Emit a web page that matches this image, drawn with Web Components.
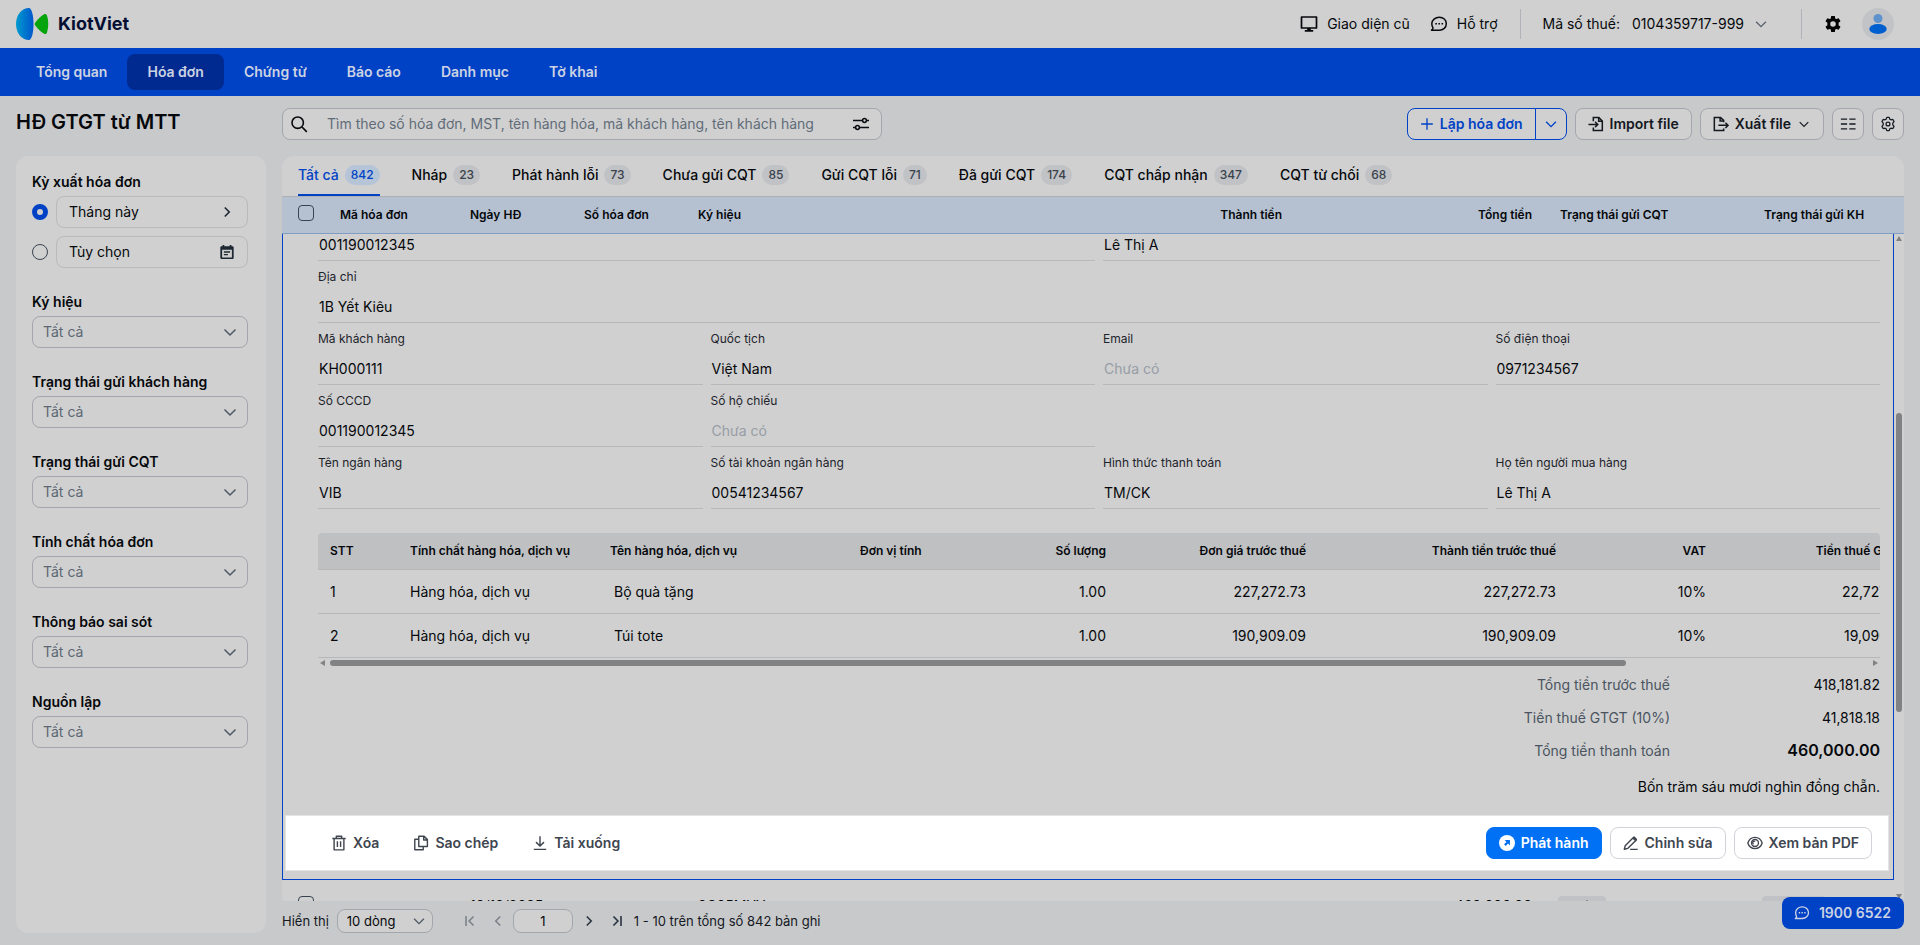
<!DOCTYPE html>
<html lang="vi">
<head>
<meta charset="utf-8">
<meta name="viewport" content="width=device-width, initial-scale=1">
<title>HĐ GTGT từ MTT - KiotViet</title>
<style>
  html, body { margin: 0; height: 100%; }
  body {
    --surface: #d0d0d0;
    --page: #c8c9cb;
    --primary: #0042c6;
    --line: #b9babd;
    --border: #a4a6ad;
    --muted: #5c6773;
    background: var(--page);
    color: #06080c;
    font: 14px/20px Inter, "Noto Sans", sans-serif;
  }
</style>
</head>
<body>
<invoice-app></invoice-app>

<script>
const ICONS = {
  monitor: `<path d="M1.500 2h15v11h-15z" fill="none" stroke="currentColor" stroke-width="1.700" stroke-linejoin="round"/><path d="M7.200 13h3.600v2h2.400v1.700H4.800V15h2.400z" fill="currentColor"/>`,
  chat: `<path d="M9.300 2.200c4 0 7 2.800 7 6.500s-3 6.500-7 6.500H1.500c1.200-.8 1.600-1.600 1.500-2.500-.8-1.100-1.200-2.400-1.200-4 0-3.700 3.500-6.500 7.500-6.500z" fill="none" stroke="currentColor" stroke-width="1.500" stroke-linejoin="round"/><path d="M5.300 7.900h1.600v1.600H5.300zM8.400 7.900H10v1.600H8.400zM11.500 7.900h1.600v1.600h-1.600z" fill="currentColor"/>`,
  down: `<path d="M3.500 6.500l5.500 5.500 5.500-5.500" fill="none" stroke="currentColor" stroke-width="1.500"/>`,
  right: `<path d="M6.500 4l5 5-5 5" fill="none" stroke="currentColor" stroke-width="1.800"/>`,
  left: `<path d="M11.500 4l-5 5 5 5" fill="none" stroke="currentColor" stroke-width="1.800"/>`,
  first: `<path d="M4.500 3.500v11M13 4L8 9l5 5" fill="none" stroke="currentColor" stroke-width="1.800"/>`,
  last: `<path d="M13.500 3.500v11M5 4l5 5-5 5" fill="none" stroke="currentColor" stroke-width="1.800"/>`,
  gearFill: `<path fill-rule="evenodd" d="M7.200 1h3.600l.4 2.400 1.200.7 2.300-.9 1.800 3.100-1.900 1.500v2.400l1.900 1.500-1.800 3.100-2.300-.9-1.200.7-.4 2.400H7.200l-.4-2.400-1.200-.7-2.300.9-1.800-3.100 1.900-1.500V7.800L1.500 6.300l1.800-3.100 2.300.9 1.200-.7zM9 6.200a2.800 2.800 0 100 5.600 2.800 2.800 0 000-5.600z" fill="currentColor"/>`,
  gear: `<path d="M7.700 1.500h2.600l.7 2 1.300.8 2.200-.4 1.300 2.300-1.400 1.700v2.200l1.400 1.700-1.300 2.300-2.200-.4-1.300.8-.7 2H7.700l-.7-2-1.300-.8-2.200.4-1.300-2.300 1.400-1.700V7.900L2.200 6.200l1.300-2.300 2.200.4L7 3.500z" fill="none" stroke="currentColor" stroke-width="1.400" stroke-linejoin="round"/><circle cx="9" cy="9" r="2.200" fill="none" stroke="currentColor" stroke-width="1.400"/>`,
  search: `<circle cx="7.700" cy="7.700" r="5.700" fill="none" stroke="currentColor" stroke-width="1.600"/><path d="M12 12l4.800 4.800" stroke="currentColor" stroke-width="1.700"/>`,
  sliders: `<g fill="none" stroke="currentColor" stroke-width="1.500"><path d="M1 5.500h9.500M14.500 5.500H17M1 12.500h2.500M7.500 12.500H17"/><circle cx="12.500" cy="5.500" r="1.900"/><circle cx="5.500" cy="12.500" r="1.900"/></g>`,
  plus: `<path d="M9 1.500v15M1.500 9h15" stroke="currentColor" stroke-width="1.700"/>`,
  importFile: `<g fill="none" stroke="currentColor" stroke-width="1.700"><path d="M6 6V1.800h6.200l3.900 3.900v10.500H6V13"/><path d="M12 2v4h4M.5 9.500h10M8 6.500l3 3-3 3"/></g>`,
  exportFile: `<g fill="none" stroke="currentColor" stroke-width="1.700"><path d="M12 7V5L8.500 1.800H1.500v14.400H12V14"/><path d="M8 2v3.500h4M6 10.500h11M14 7.500l3 3-3 3"/></g>`,
  columns: `<path d="M1 3.500h7M10.500 3.500h7M1 9h7M10.500 9h7M1 14.500h7M10.500 14.500h7" stroke="currentColor" stroke-width="1.500"/>`,
  calendar: `<path fill-rule="evenodd" d="M4 1h2v1.500h6V1h2v1.500h1.500l1 1V16l-1 1h-13l-1-1V3.500l1-1H4zM3.500 6.500v8.800h11V6.500z" fill="currentColor"/><path d="M5.500 9h7M5.500 12h4.500" stroke="currentColor" stroke-width="1.500"/>`,
  trash: `<path d="M1.500 4h15M6 3.800V1.500h6v2.300M3.500 4v12.700h11V4M7.200 7v6.500M10.800 7v6.500" fill="none" stroke="currentColor" stroke-width="1.600" stroke-linejoin="round"/>`,
  copy: `<path d="M6.500 1.500h6l3.700 3.700v7.700H6.500zM12 1.700v4h4M6 4.800H2v11.700h9.500V13" fill="none" stroke="currentColor" stroke-width="1.600" stroke-linejoin="round"/>`,
  download: `<path d="M9 1.500v10.700M4.500 8L9 12.300 13.500 8M2 16.200h14" fill="none" stroke="currentColor" stroke-width="1.600"/>`,
  publish: `<circle cx="9" cy="9" r="9" fill="currentColor"/><path d="M6.300 5.700h6v6l-2.100-2.100-2.700 2.700-1.800-1.800 2.700-2.700z" fill="#0070f4"/>`,
  edit: `<path d="M2.500 12L12 2.500l3 3L5.500 15l-4 1zM8 16.200h8.500" fill="none" stroke="currentColor" stroke-width="1.600" stroke-linejoin="round"/><path d="M10.500 4l2.300-2.500L16 4.700 13.800 7z" fill="currentColor"/>`,
  eye: `<g fill="none" stroke="currentColor" stroke-width="1.500"><path d="M.9 9C2.200 5 5.300 2.700 9 2.700S15.800 5 17.100 9c-1.300 4-4.400 6.300-8.100 6.300S2.200 13 .9 9z"/><circle cx="9" cy="9" r="3.900"/><path d="M9 7.500A1.500 1.500 0 107.700 10"/></g>`,
};

class BaseElement extends HTMLElement {
  constructor() {
    super();
    this.shadow = this.attachShadow({ mode: "open" });
  }
  connectedCallback() {
    this.render();
  }
}

class AppIcon extends BaseElement {
  render() {
    const size = this.getAttribute("size") || 16;
    this.shadow.innerHTML = `
      <style>
        :host { display: inline-flex; flex: none; }
        svg { display: block; }
      </style>
      <svg width="${size}" height="${size}" viewBox="0 0 18 18" aria-hidden="true">${ICONS[this.getAttribute("name")]}</svg>`;
  }
}

class AppButton extends BaseElement {
  render() {
    const label = this.getAttribute("label");
    this.shadow.innerHTML = `
      <style>
        :host { display: inline-flex; }
        button {
          display: flex;
          align-items: center;
          justify-content: center;
          gap: 6px;
          box-sizing: border-box;
          height: 32px;
          min-width: 32px;
          padding: 0 12px;
          border: 1px solid var(--border);
          border-radius: 8px;
          background: var(--button-bg, transparent);
          color: #14181f;
          font: 600 14px/20px Inter, sans-serif;
          white-space: nowrap;
        }
        :host([kind="icon"]) button { padding: 0; }
        :host([kind="publish"]) button { background: #0070f4; border-color: #0070f4; color: #fff; }
        :host([kind="light"]) button { background: #fff; border-color: #d1d3d9; color: #40464f; }
        :host([kind="plain"]) button { border-color: transparent; color: #40464f; }
      </style>
      <button type="button"${label ? ` aria-label="${label}"` : ""}><slot></slot></button>`;
  }
}

class AppHeader extends BaseElement {
  render() {
    this.shadow.innerHTML = `
      <style>
        :host {
          display: flex;
          align-items: center;
          height: 48px;
          box-sizing: border-box;
          padding: 0 26px 0 16px;
          background: var(--surface);
        }
        a { display: flex; align-items: center; gap: 9px; color: inherit; text-decoration: none; }
        .logo { margin-right: auto; font-size: 18px; font-weight: 700; color: #050f33; }
        .help { margin-left: 20px; }
        .divider { width: 1px; height: 30px; background: #b0b2b7; margin: 0 22px; }
        .tax {
          display: flex;
          align-items: center;
          gap: 9px;
          padding: 0;
          border: 0;
          background: none;
          color: inherit;
          font: inherit;
        }
        .tax span { margin-right: 3px; }
        .tax app-icon { color: #59616d; margin-right: 10px; }
        .settings { display: flex; padding: 0; border: 0; background: none; color: #000; }
        .avatar { margin-left: 20px; padding: 0; border: 0; background: none; display: flex; }
      </style>
      <a class="logo" href="#">
        <svg width="33" height="32" viewBox="0 0 33 32" aria-hidden="true">
          <defs><linearGradient id="g"><stop offset="0" stop-color="#009bce"/><stop offset="1" stop-color="#0056cd"/></linearGradient></defs>
          <path d="M13 0c2.500 0 4.500 7 4.500 16S15.500 32 13 32C5.500 32 0 25 0 16S5.500 0 13 0z" fill="url(#g)"/>
          <path d="M19.300 14.500c2.500-3.400 5.700-6.600 8.800-8.300 1.300-.7 2.400 0 2.900 1.400 1.700 5 1.700 11.800 0 16.800-.5 1.400-1.600 2.100-2.900 1.400-3.100-1.700-6.300-4.900-8.800-8.300-.8-1-.8-2 0-3z" fill="#05a40c"/>
        </svg>
        KiotViet
      </a>
      <a href="#"><app-icon name="monitor" size="18"></app-icon>Giao diện cũ</a>
      <a class="help" href="#"><app-icon name="chat" size="18"></app-icon>Hỗ trợ</a>
      <div class="divider"></div>
      <button class="tax" type="button"><span>Mã số thuế:</span>0104359717-999<app-icon name="down"></app-icon></button>
      <div class="divider"></div>
      <button class="settings" type="button" aria-label="Cài đặt"><app-icon name="gearFill" size="18"></app-icon></button>
      <button class="avatar" type="button" aria-label="Tài khoản">
        <svg width="32" height="32" viewBox="0 0 32 32" aria-hidden="true">
          <circle cx="16" cy="16" r="16" fill="#c1c3c6"/>
          <circle cx="16" cy="10.500" r="4.500" fill="#5f92cd"/>
          <ellipse cx="16" cy="21" rx="8.700" ry="5" fill="#005fcf"/>
        </svg>
      </button>`;
  }
}

class MainNav extends BaseElement {
  render() {
    const items = ["Tổng quan", "Hóa đơn", "Chứng từ", "Báo cáo", "Danh mục", "Tờ khai"];
    this.shadow.innerHTML = `
      <style>
        :host { display: block; background: var(--primary); }
        nav { display: flex; align-items: center; height: 48px; padding: 0 16px; }
        a {
          padding: 8px 20px;
          border-radius: 8px;
          color: #ccd3e3;
          font-weight: 600;
          text-decoration: none;
        }
        a.active { background: #002a8f; }
      </style>
      <nav>${items.map((t, i) => `<a href="#"${i === 1 ? ' class="active" aria-current="page"' : ""}>${t}</a>`).join("")}</nav>`;
  }
}

class FilterSelect extends BaseElement {
  render() {
    this.shadow.innerHTML = `
      <style>
        :host { display: grid; gap: 4px; }
        label { font-weight: 600; }
        .box { display: grid; align-items: center; }
        .box > * { grid-area: 1 / 1; }
        select {
          appearance: none;
          height: 32px;
          width: 100%;
          box-sizing: border-box;
          padding: 0 10px;
          border: 1px solid var(--border);
          border-radius: 8px;
          background: transparent;
          color: var(--muted);
          font: inherit;
        }
        app-icon { justify-self: end; margin-right: 9px; pointer-events: none; color: #4f5966; }
      </style>
      <label for="s">${this.getAttribute("label")}</label>
      <div class="box">
        <select id="s"><option>Tất cả</option></select>
        <app-icon name="down" size="18"></app-icon>
      </div>`;
  }
}

class FilterPanel extends BaseElement {
  render() {
    const filters = ["Ký hiệu", "Trạng thái gửi khách hàng", "Trạng thái gửi CQT", "Tính chất hóa đơn", "Thông báo sai sót", "Nguồn lập"];
    this.shadow.innerHTML = `
      <style>
        :host {
          display: flex;
          flex-direction: column;
          gap: 24px;
          flex: 1;
          padding: 16px 18px 16px 16px;
          border-radius: 12px;
          background: var(--surface);
        }
        fieldset { display: grid; gap: 8px; margin: 0; padding: 0; border: 0; }
        legend { padding: 0; margin-bottom: 4px; font-weight: 600; }
        .row { display: flex; align-items: center; gap: 8px; }
        input {
          appearance: none;
          flex: none;
          box-sizing: border-box;
          width: 16px;
          height: 16px;
          margin: 0;
          border: 1px solid #39434f;
          border-radius: 50%;
        }
        input:checked { border: 5px solid var(--primary); }
        label {
          display: flex;
          flex: 1;
          align-items: center;
          justify-content: space-between;
          box-sizing: border-box;
          height: 32px;
          padding: 0 12px;
          border: 1px solid var(--line);
          border-radius: 8px;
        }
        app-icon { color: #1e2833; }
      </style>
      <fieldset>
        <legend>Kỳ xuất hóa đơn</legend>
        <div class="row"><input type="radio" name="p" id="month" checked><label for="month">Tháng này<app-icon name="right"></app-icon></label></div>
        <div class="row"><input type="radio" name="p" id="custom"><label for="custom">Tùy chọn<app-icon name="calendar"></app-icon></label></div>
      </fieldset>
      ${filters.map((f) => `<filter-select label="${f}"></filter-select>`).join("")}`;
  }
}

class InvoiceToolbar extends BaseElement {
  render() {
    this.shadow.innerHTML = `
      <style>
        :host { display: flex; gap: 8px; }
        .search {
          display: flex;
          align-items: center;
          box-sizing: border-box;
          width: 600px;
          height: 32px;
          margin-right: auto;
          padding: 0 11px 0 7px;
          border: 1px solid var(--border);
          border-radius: 8px;
          background: var(--surface);
        }
        input {
          flex: 1;
          min-width: 0;
          margin: 0 19px;
          padding: 0;
          border: 0;
          outline: 0;
          background: none;
          font: inherit;
        }
        input::placeholder { color: #616c78; opacity: 1; }
        .search button { display: flex; padding: 0; border: 0; background: none; color: #0a0d12; }
        app-button { --button-bg: var(--surface); }
        .split { display: flex; border: 1px solid var(--primary); border-radius: 8px; background: var(--surface); overflow: hidden; box-sizing: border-box; height: 32px; }
        .split button {
          display: flex;
          align-items: center;
          gap: 6px;
          padding: 0 12px;
          border: 0;
          background: none;
          color: var(--primary);
          font: 600 14px/20px Inter, sans-serif;
        }
        .split button + button { padding: 0 7px; border-left: 1px solid var(--primary); }
      </style>
      <div class="search">
        <app-icon name="search" size="18"></app-icon>
        <input type="text" aria-label="Tìm kiếm" placeholder="Tìm theo số hóa đơn, MST, tên hàng hóa, mã khách hàng, tên khách hàng">
        <button type="button" aria-label="Bộ lọc"><app-icon name="sliders" size="18"></app-icon></button>
      </div>
      <div class="split">
        <button type="button"><app-icon name="plus" size="14"></app-icon>Lập hóa đơn</button>
        <button type="button" aria-label="Thêm lựa chọn"><app-icon name="down"></app-icon></button>
      </div>
      <app-button><app-icon name="importFile"></app-icon>Import file</app-button>
      <app-button><app-icon name="exportFile"></app-icon>Xuất file<app-icon name="down" size="14"></app-icon></app-button>
      <app-button kind="icon" label="Cột hiển thị"><app-icon name="columns"></app-icon></app-button>
      <app-button kind="icon" label="Thiết lập"><app-icon name="gear"></app-icon></app-button>`;
  }
}

class StatusTabs extends BaseElement {
  render() {
    const tabs = [["Tất cả", 842], ["Nháp", 23], ["Phát hành lỗi", 73], ["Chưa gửi CQT", 85], ["Gửi CQT lỗi", 71], ["Đã gửi CQT", 174], ["CQT chấp nhận", 347], ["CQT từ chối", 68]];
    this.shadow.innerHTML = `
      <style>
        :host { display: block; border-bottom: 1px solid #aeb0b4; }
        div { display: flex; gap: 32px; padding: 0 16px; }
        button {
          display: flex;
          align-items: center;
          gap: 6px;
          height: 40px;
          padding: 0;
          border: 0;
          border-bottom: 2px solid transparent;
          background: none;
          color: inherit;
          font: 500 14px/20px Inter, sans-serif;
          white-space: nowrap;
        }
        span {
          padding: 0 6px;
          border-radius: 10px;
          background: #c0c2c5;
          color: #39414b;
          font-size: 12px;
        }
        button.active { border-color: var(--primary); color: var(--primary); }
        .active span { background: #b5c4d6; color: var(--primary); }
      </style>
      <div role="tablist">
        ${tabs.map(([t, n], i) => `<button type="button" role="tab" aria-selected="${i === 0}" class="${i === 0 ? "active" : ""}">${t}<span>${n}</span></button>`).join("")}
      </div>`;
  }
}

class InfoField extends BaseElement {
  render() {
    const label = this.getAttribute("label");
    this.shadow.innerHTML = `
      <style>
        :host { display: block; border-bottom: 1px solid #b7b8ba; padding-bottom: 4px; }
        .label { padding: 6px 0 9px; font-size: 12px; color: #1d232b; }
        .value { padding-left: 1px; line-height: 22px; }
        :host([empty]) .value { color: #979da6; }
      </style>
      ${label ? `<div class="label">${label}</div>` : ""}
      <div class="value"><slot></slot></div>`;
  }
}

class ItemsTable extends BaseElement {
  render() {
    const heads = ["STT", "Tính chất hàng hóa, dịch vụ", "Tên hàng hóa, dịch vụ", "Đơn vị tính", "Số lượng", "Đơn giá trước thuế", "Thành tiền trước thuế", "VAT", "Tiền thuế GTGT"];
    const widths = [80, 200, 250, 150, 120, 200, 250, 150, 200];
    const rows = [
      ["1", "Hàng hóa, dịch vụ", "Bộ quà tặng", "", "1.00", "227,272.73", "227,272.73", "10%", "22,727.27"],
      ["2", "Hàng hóa, dịch vụ", "Túi tote", "", "1.00", "190,909.09", "190,909.09", "10%", "19,090.91"],
    ];
    this.shadow.innerHTML = `
      <style>
        :host { display: block; }
        .view { overflow: hidden; border-radius: 4px 4px 0 0; }
        table { table-layout: fixed; width: 1600px; border-collapse: separate; border-spacing: 0; }
        th, td { box-sizing: border-box; padding: 0 12px; border-bottom: 1px solid #b7b8ba; text-align: left; white-space: nowrap; }
        th { height: 37px; background: #bfc0c2; font-size: 12px; font-weight: 600; }
        td { height: 44px; }
        td:nth-child(3) { padding-left: 16px; }
        th:nth-child(n+5), td:nth-child(n+5) { text-align: right; }
        .scroll { display: flex; align-items: center; justify-content: space-between; margin-top: 2px; height: 6px; }
        .thumb { width: 83%; height: 6px; margin: 0 auto 0 5px; border-radius: 3px; background: #818284; }
        i { border: 3px solid transparent; }
        .prev { border-right: 5px solid #818284; border-left: 0; margin-left: 2px; }
        .next { border-left: 5px solid #818284; border-right: 0; margin-right: 2px; }
      </style>
      <div class="view">
        <table>
          <colgroup>${widths.map((w) => `<col style="width:${w}px">`).join("")}</colgroup>
          <thead><tr>${heads.map((h) => `<th>${h}</th>`).join("")}</tr></thead>
          <tbody>${rows.map((r) => `<tr>${r.map((c) => `<td>${c}</td>`).join("")}</tr>`).join("")}</tbody>
        </table>
      </div>
      <div class="scroll"><i class="prev"></i><div class="thumb"></div><i class="next"></i></div>`;
  }
}

class InvoiceTotals extends BaseElement {
  render() {
    this.shadow.innerHTML = `
      <style>
        :host { display: block; margin-top: 2px; text-align: right; }
        dl { display: grid; grid-template-columns: 1fr 210px; margin: 0; line-height: 33px; }
        dt { color: #4a545f; }
        dd { margin: 0; }
        .total { font-size: 16px; font-weight: 600; }
        p { margin: 0; line-height: 39px; }
      </style>
      <dl>
        <dt>Tổng tiền trước thuế</dt><dd>418,181.82</dd>
        <dt>Tiền thuế GTGT (10%)</dt><dd>41,818.18</dd>
        <dt>Tổng tiền thanh toán</dt><dd class="total">460,000.00</dd>
      </dl>
      <p>Bốn trăm sáu mươi nghìn đồng chẵn.</p>`;
  }
}

class InvoiceDetail extends BaseElement {
  render() {
    this.shadow.innerHTML = `
      <style>
        :host { display: block; border: 1px solid var(--primary); border-top: 0; }
        .content { padding: 0 13px 0 35px; }
        .fields { display: grid; grid-template-columns: repeat(4, 1fr); column-gap: 8px; margin-bottom: 24px; }
        .half { grid-column: span 2; }
        .full { grid-column: 1 / -1; }
        .row-start { grid-column-start: 1; }
        .actions {
          display: flex;
          align-items: center;
          gap: 8px;
          box-sizing: border-box;
          height: 56px;
          margin: 9px 4px 8px 2px;
          padding: 0 16px 0 32px;
          border: 1px solid #e4e4e4;
          background: #fff;
        }
        .left { display: flex; gap: 8px; margin-right: auto; }
      </style>
      <div class="content">
        <div class="fields">
          <info-field class="half">001190012345</info-field>
          <info-field class="half">Lê Thị A</info-field>
          <info-field class="full" label="Địa chỉ">1B Yết Kiêu</info-field>
          <info-field label="Mã khách hàng">KH000111</info-field>
          <info-field label="Quốc tịch">Việt Nam</info-field>
          <info-field label="Email" empty>Chưa có</info-field>
          <info-field label="Số điện thoại">0971234567</info-field>
          <info-field label="Số CCCD">001190012345</info-field>
          <info-field label="Số hộ chiếu" empty>Chưa có</info-field>
          <info-field class="row-start" label="Tên ngân hàng">VIB</info-field>
          <info-field label="Số tài khoản ngân hàng">00541234567</info-field>
          <info-field label="Hình thức thanh toán">TM/CK</info-field>
          <info-field label="Họ tên người mua hàng">Lê Thị A</info-field>
        </div>
        <items-table></items-table>
        <invoice-totals></invoice-totals>
      </div>
      <div class="actions">
        <div class="left">
          <app-button kind="plain"><app-icon name="trash"></app-icon>Xóa</app-button>
          <app-button kind="plain"><app-icon name="copy"></app-icon>Sao chép</app-button>
          <app-button kind="plain"><app-icon name="download"></app-icon>Tải xuống</app-button>
        </div>
        <app-button kind="publish"><app-icon name="publish"></app-icon>Phát hành</app-button>
        <app-button kind="light"><app-icon name="edit"></app-icon>Chỉnh sửa</app-button>
        <app-button kind="light"><app-icon name="eye"></app-icon>Xem bản PDF</app-button>
      </div>`;
  }
}

class InvoiceTable extends BaseElement {
  render() {
    this.shadow.innerHTML = `
      <style>
        :host { display: block; position: relative; flex: 1; min-height: 0; overflow: hidden; }
        table { table-layout: fixed; width: 100%; border-collapse: separate; border-spacing: 0; }
        th, td { box-sizing: border-box; padding: 0 14px; text-align: left; white-space: nowrap; }
        th { height: 37px; border-bottom: 1px solid #809dc5; background: #b5c1d1; font-size: 12px; font-weight: 600; }
        th:first-child, td:first-child { padding: 0 0 0 16px; }
        th:nth-child(6), th:nth-child(7), td:nth-child(6), td:nth-child(7) { text-align: right; }
        td.detail { padding: 0 10px 0 0; }
        .next td { height: 48px; padding-top: 16px; vertical-align: top; }
        .badge { display: block; box-sizing: border-box; width: 48px; height: 20px; margin-left: -2px; border-radius: 4px; background: #c0c2c5; font-size: 12px; text-align: center; }
        .badge.wide { width: 64px; }
        input {
          appearance: none;
          display: block;
          box-sizing: border-box;
          width: 16px;
          height: 16px;
          margin: 0 0 4px;
          border: 1px solid #39434f;
          border-radius: 4px;
        }
        .next input { margin: 0; }
        .bar { position: absolute; top: 37px; right: 0; bottom: 0; width: 10px; box-sizing: border-box; padding: 2px; display: flex; flex-direction: column; align-items: center; }
        .gap { height: 26%; }
        .thumb { width: 6px; height: 45%; margin: 0 0 auto; border-radius: 3px; background: #818284; }
        i { border: 3px solid transparent; }
        .up { border-bottom: 5px solid #818284; border-top: 0; }
        .down { border-top: 5px solid #818284; border-bottom: 0; }
      </style>
      <table>
        <colgroup><col style="width:44px"><col style="width:130px"><col style="width:114px"><col style="width:114px"><col><col style="width:160px"><col style="width:250px"><col style="width:204px"><col style="width:154px"></colgroup>
        <thead>
          <tr><th><input type="checkbox" aria-label="Chọn tất cả"></th><th>Mã hóa đơn</th><th>Ngày HĐ</th><th>Số hóa đơn</th><th>Ký hiệu</th><th>Thành tiền</th><th>Tổng tiền</th><th>Trạng thái gửi CQT</th><th>Trạng thái gửi KH</th></tr>
        </thead>
        <tbody>
          <tr><td class="detail" colspan="9"><invoice-detail></invoice-detail></td></tr>
          <tr class="next"><td><input type="checkbox" aria-label="Chọn hóa đơn"></td><td></td><td>10/12/2025</td><td></td><td>2C25MYY</td><td></td><td>460,000.00</td><td><span class="badge">Nháp</span></td><td><span class="badge wide"></span></td></tr>
        </tbody>
      </table>
      <div class="bar"><i class="up"></i><div class="gap"></div><div class="thumb"></div><i class="down"></i></div>`;
  }
}

class TablePager extends BaseElement {
  render() {
    this.shadow.innerHTML = `
      <style>
        :host { display: flex; align-items: center; height: 24px; padding: 8px 0 12px; font-size: 13px; color: #14181f; }
        .size { display: grid; align-items: center; margin: 0 24px 0 8px; }
        .size > * { grid-area: 1 / 1; }
        .size app-icon { justify-self: end; margin-right: 6px; pointer-events: none; color: #4f5966; }
        select, input {
          appearance: none;
          box-sizing: border-box;
          height: 24px;
          border: 1px solid var(--border);
          border-radius: 8px;
          background: var(--surface);
          color: #06080c;
          font: inherit;
        }
        select { width: 96px; padding: 0 9px; }
        input { width: 60px; padding: 0; text-align: center; }
        button { display: flex; padding: 0 5px; border: 0; background: none; color: #2a3440; }
        button:disabled { color: #7d838b; }
        .prev { margin: 0 2px; }
        .next { margin: 0 2px 0 3px; }
        .info { margin-left: 4px; }
      </style>
      <label for="size">Hiển thị</label>
      <div class="size"><select id="size"><option>10 dòng</option></select><app-icon name="down"></app-icon></div>
      <button type="button" disabled aria-label="Trang đầu"><app-icon name="first"></app-icon></button>
      <button class="prev" type="button" disabled aria-label="Trang trước"><app-icon name="left"></app-icon></button>
      <input type="text" value="1" aria-label="Trang">
      <button class="next" type="button" aria-label="Trang sau"><app-icon name="right"></app-icon></button>
      <button type="button" aria-label="Trang cuối"><app-icon name="last"></app-icon></button>
      <span class="info">1 - 10 trên tổng số 842 bản ghi</span>`;
  }
}

class SupportButton extends BaseElement {
  render() {
    this.shadow.innerHTML = `
      <style>
        :host { position: fixed; right: 16px; bottom: 16px; }
        a {
          display: flex;
          align-items: center;
          gap: 9px;
          padding: 6px 13px 6px 12px;
          border-radius: 8px;
          background: var(--primary);
          color: #ccd3e3;
          font-weight: 600;
          text-decoration: none;
        }
      </style>
      <a href="tel:19006522"><app-icon name="chat"></app-icon>1900 6522</a>`;
  }
}

class InvoiceApp extends BaseElement {
  render() {
    this.shadow.innerHTML = `
      <style>
        :host { display: flex; flex-direction: column; height: 100vh; }
        .page { display: grid; grid-template-columns: 250px minmax(0, 1fr); gap: 16px; flex: 1; min-height: 0; padding: 0 16px; }
        aside, main { display: flex; flex-direction: column; min-height: 0; }
        aside { padding-bottom: 12px; }
        h1 { margin: 12px 0 16px; font-size: 20px; line-height: 28px; padding-bottom: 4px; font-weight: 600; }
        invoice-toolbar { margin: 12px 0 16px; }
        .card { display: flex; flex-direction: column; flex: 1; min-height: 0; border-radius: 12px 12px 4px 4px; background: var(--surface); overflow: hidden; }
      </style>
      <app-header></app-header>
      <main-nav></main-nav>
      <div class="page">
        <aside>
          <h1>HĐ GTGT từ MTT</h1>
          <filter-panel></filter-panel>
        </aside>
        <main>
          <invoice-toolbar></invoice-toolbar>
          <div class="card">
            <status-tabs></status-tabs>
            <invoice-table></invoice-table>
          </div>
          <table-pager></table-pager>
        </main>
      </div>
      <support-button></support-button>`;
  }
}

customElements.define("app-icon", AppIcon);
customElements.define("app-button", AppButton);
customElements.define("app-header", AppHeader);
customElements.define("main-nav", MainNav);
customElements.define("filter-select", FilterSelect);
customElements.define("filter-panel", FilterPanel);
customElements.define("invoice-toolbar", InvoiceToolbar);
customElements.define("status-tabs", StatusTabs);
customElements.define("info-field", InfoField);
customElements.define("items-table", ItemsTable);
customElements.define("invoice-totals", InvoiceTotals);
customElements.define("invoice-detail", InvoiceDetail);
customElements.define("invoice-table", InvoiceTable);
customElements.define("table-pager", TablePager);
customElements.define("support-button", SupportButton);
customElements.define("invoice-app", InvoiceApp);
</script>
</body>
</html>
